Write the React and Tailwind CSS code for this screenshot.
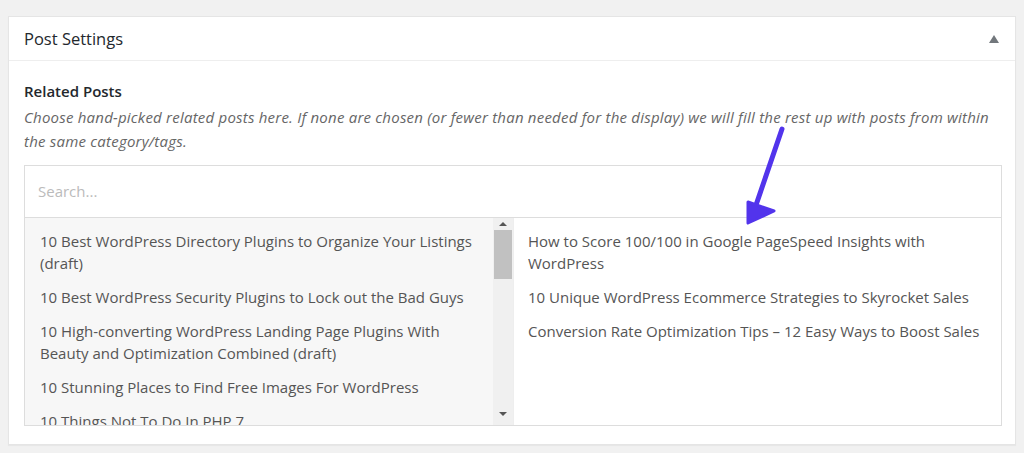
export default function App() {
  const leftPosts = [
    "10 Best WordPress Directory Plugins to Organize Your Listings (draft)",
    "10 Best WordPress Security Plugins to Lock out the Bad Guys",
    "10 High-converting WordPress Landing Page Plugins With Beauty and Optimization Combined (draft)",
    "10 Stunning Places to Find Free Images For WordPress",
    "10 Things Not To Do In PHP 7",
  ];
  const chosen = [
    "How to Score 100/100 in Google PageSpeed Insights with WordPress",
    "10 Unique WordPress Ecommerce Strategies to Skyrocket Sales",
    "Conversion Rate Optimization Tips – 12 Easy Ways to Boost Sales",
  ];

  return (
    <div className="relative h-[453px] w-[1024px] overflow-hidden bg-[#f1f1f1] pt-4 pl-2 pr-2 font-['Open_Sans',sans-serif] text-[#444]">
      <div className="h-[429px] w-[1008px] border border-[#e5e5e5] bg-white shadow-[0_1px_1px_rgba(0,0,0,0.04)]">
        {/* Header */}
        <div className="flex h-[44px] items-center justify-between border-b border-[#eee] pl-[15px] pr-[16px]">
          <h2 className="mt-[2px] text-[16.5px] text-[#23282d]">Post Settings</h2>
          <span className="mt-[1px] h-0 w-0 border-x-[5px] border-b-[8px] border-x-transparent border-b-[#72777c]" />
        </div>

        {/* Body */}
        <div className="pl-[15px] pr-[14px] pt-[19px]">
          <h3 className="text-[15px] font-semibold leading-[22px] text-[#23282d]">Related Posts</h3>
          <p className="mt-[3px] text-[15px] italic leading-[24px] tracking-[0.22px] text-[#666]">
            Choose hand-picked related posts here. If none are chosen (or fewer than needed for the display) we will fill the rest up with posts from within the same category/tags.
          </p>

          <div className="mt-[12px] w-[978px] border border-[#ddd]">
            <div className="flex h-[52px] items-center border-b border-[#ddd] px-[13px]">
              <span className="text-[15px] text-[#bbb]">Search...</span>
            </div>
            <div className="flex h-[207px]">
              {/* Available posts */}
              <div className="flex w-[488px] bg-[#f7f7f7]">
                <ul className="flex-1 overflow-hidden pt-[6px] pl-[15px] pr-[12px]">
                  {leftPosts.map((p) => (
                    <li key={p} className="py-[6px] text-[15px] leading-[22px] text-[#555]">
                      {p}
                    </li>
                  ))}
                </ul>
                <div className="flex w-[20px] flex-col items-center bg-[#f0f0f0]">
                  <span className="mt-[4px] h-0 w-0 border-x-[4px] border-b-[4px] border-x-transparent border-b-[#555]" />
                  <div className="mt-[4px] h-[49px] w-[18px] bg-[#c1c1c1]" />
                  <div className="flex-1" />
                  <span className="mb-[9px] h-0 w-0 border-x-[4px] border-t-[4px] border-x-transparent border-t-[#555]" />
                </div>
              </div>
              {/* Chosen posts */}
              <ul className="flex-1 border-l border-[#eee] bg-white pt-[6px] pl-[14px] pr-[12px]">
                {chosen.map((p) => (
                  <li key={p} className="py-[6px] text-[15px] leading-[22px] text-[#555]">
                    {p}
                  </li>
                ))}
              </ul>
            </div>
          </div>
        </div>
      </div>

      {/* Annotation arrow */}
      <svg className="absolute left-[740px] top-[122px]" width="60" height="106" viewBox="0 0 60 106">
        <path d="M42 7 L15 86" stroke="#5234ec" strokeWidth="5" strokeLinecap="round" fill="none" />
        <path d="M8 80 L34 89 L8 101 Z" fill="#5234ec" stroke="#5234ec" strokeWidth="3" strokeLinejoin="round" />
      </svg>
    </div>
  );
}
